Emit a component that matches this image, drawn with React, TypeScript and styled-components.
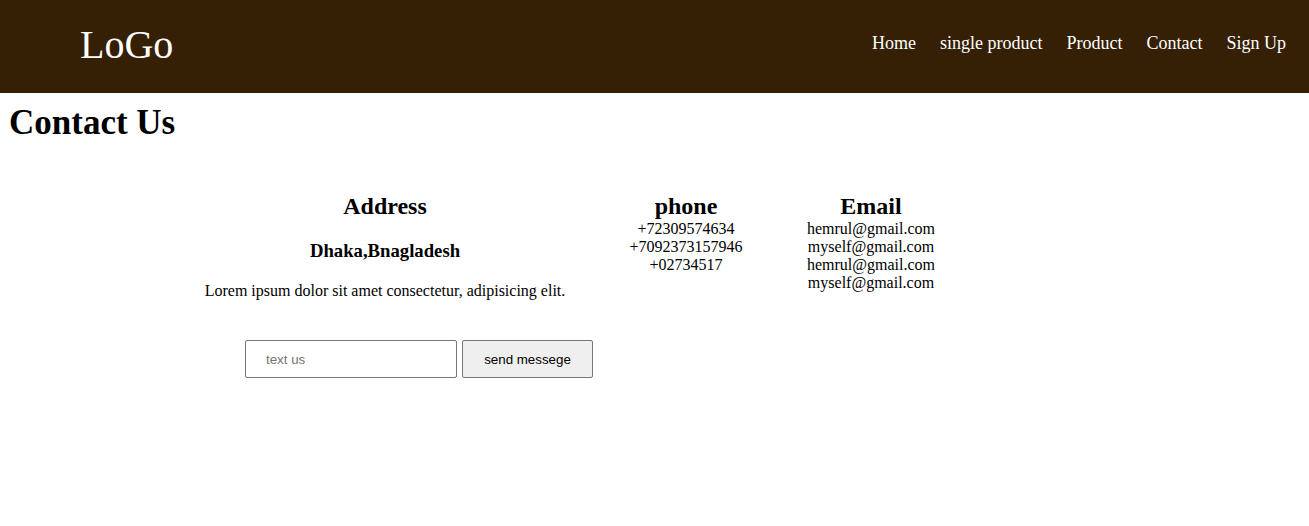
import styled, { createGlobalStyle } from 'styled-components';

const GlobalStyle = createGlobalStyle`
  body {
    margin: 0;
    background: #ffffff;
    font-family: 'Liberation Serif', 'Times New Roman', serif;
    color: #000000;
  }
`;

const Header = styled.header`
  height: 93px;
  box-sizing: border-box;
  padding: 0 23px 5px 80px;
  background-color: #352005;
  display: flex;
  align-items: center;
  justify-content: space-between;
`;

const Logo = styled.div`
  font-size: 40px;
  color: #ffffff;
`;

const Nav = styled.nav`
  display: flex;
  gap: 24px;
  margin-bottom: 2px;
`;

const NavLink = styled.a`
  font-size: 18px;
  color: #ffffff;
  text-decoration: none;
  cursor: pointer;
`;

const Title = styled.h1`
  margin: 10px 0 0 9px;
  font-size: 35px;
  font-weight: 700;
`;

const InfoRow = styled.section`
  display: flex;
  align-items: flex-start;
  margin-top: 50px;
  padding-left: 185px;
`;

const Column = styled.div<{ $width: number }>`
  width: ${(p) => p.$width}px;
  text-align: center;
`;

const ColumnTitle = styled.h2`
  margin: 0;
  font-size: 24px;
  font-weight: 700;
`;

const City = styled.h3`
  margin: 20px 0 0;
  font-size: 18.72px;
  font-weight: 700;
`;

const Blurb = styled.p`
  margin: 20px 0 0;
  font-size: 16px;
`;

const Line = styled.div`
  font-size: 16px;
`;

const MessageForm = styled.form`
  display: flex;
  gap: 5px;
  margin-top: 40px;
  padding-left: 245px;
`;

const MessageInput = styled.input`
  box-sizing: border-box;
  width: 212px;
  height: 38px;
  padding: 0 20px;
  border: 1px solid #767676;
  border-radius: 2px;
  font-family: 'Liberation Sans', Arial, sans-serif;
  font-size: 13.33px;
  outline: none;

  &::placeholder {
    color: #757575;
  }
`;

const SendButton = styled.button`
  box-sizing: border-box;
  width: 131px;
  height: 38px;
  border: 1px solid #767676;
  border-radius: 2px;
  background: #efefef;
  font-family: 'Liberation Sans', Arial, sans-serif;
  font-size: 13.33px;
  color: #000000;
  cursor: pointer;
`;

const links = ['Home', 'single product', 'Product', 'Contact', 'Sign Up'];
const phones = ['+72309574634', '+7092373157946', '+02734517'];
const emails = ['hemrul@gmail.com', 'myself@gmail.com', 'hemrul@gmail.com', 'myself@gmail.com'];

export default function App() {
  return (
    <>
      <GlobalStyle />
      <Header>
        <Logo>LoGo</Logo>
        <Nav>
          {links.map((l) => (
            <NavLink key={l}>{l}</NavLink>
          ))}
        </Nav>
      </Header>

      <Title>Contact Us</Title>

      <InfoRow>
        <Column $width={400}>
          <ColumnTitle>Address</ColumnTitle>
          <City>Dhaka,Bnagladesh</City>
          <Blurb>Lorem ipsum dolor sit amet consectetur, adipisicing elit.</Blurb>
        </Column>
        <Column $width={202}>
          <ColumnTitle>phone</ColumnTitle>
          {phones.map((p) => (
            <Line key={p}>{p}</Line>
          ))}
        </Column>
        <Column $width={168}>
          <ColumnTitle>Email</ColumnTitle>
          {emails.map((e, i) => (
            <Line key={i}>{e}</Line>
          ))}
        </Column>
      </InfoRow>

      <MessageForm onSubmit={(e) => e.preventDefault()}>
        <MessageInput type="text" placeholder="text us" />
        <SendButton type="submit">send messege</SendButton>
      </MessageForm>
    </>
  );
}
